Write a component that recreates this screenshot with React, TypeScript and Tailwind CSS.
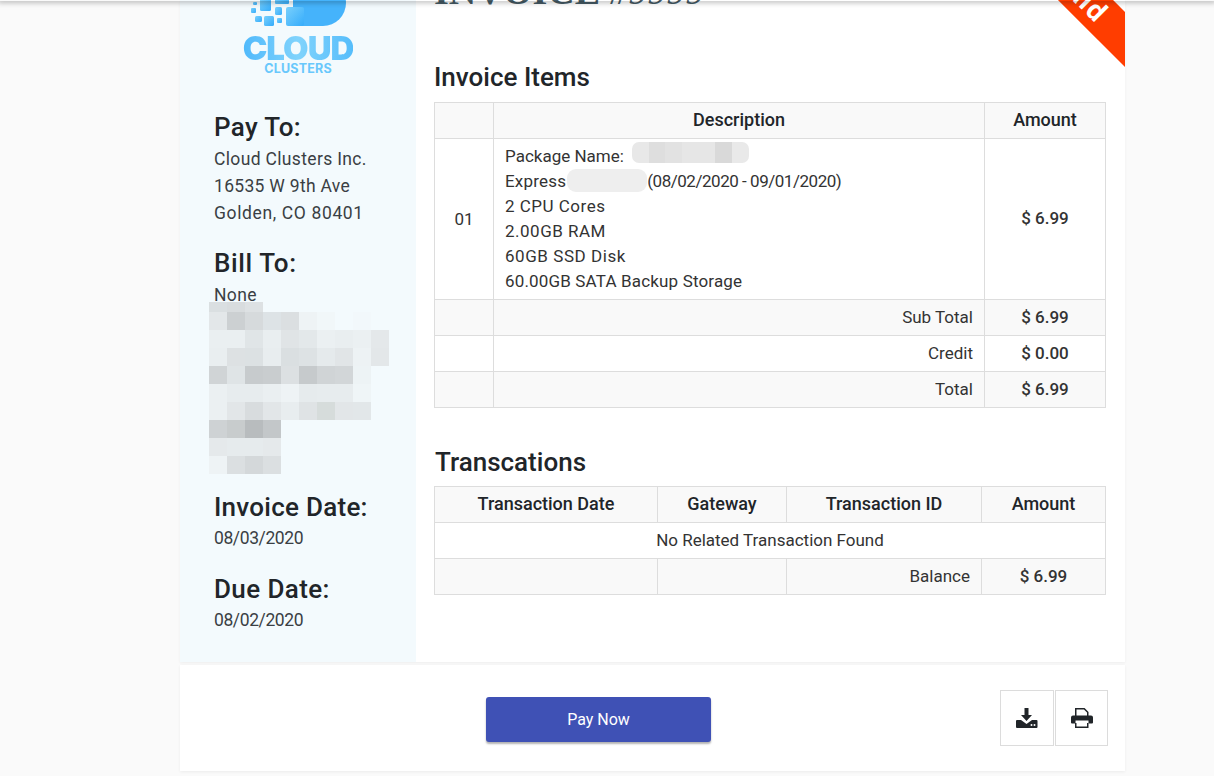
import React from "react";

const P = "#f3fafd";
const mosaic: string[][] = [
  ["#dadfe1", "#d8dcde", "#dde1e3", P, P, P, P, P, P, P],
  ["#e3e7e9", "#ccd0d2", "#d6dadc", "#dde3e6", "#dbdfe1", "#eef3f5", "#f1f7f9", P, "#f2f8fb", P],
  ["#eaeff1", "#eaeff1", "#e0e5e7", "#e9eef0", "#e0e4e6", "#e3e8ea", "#ebf0f2", "#e9eef0", "#ebf0f2", "#e4e8ea"],
  ["#e9eef0", "#dde1e3", "#dce1e3", "#e8edef", "#dadfe1", "#dde2e4", "#e5eaec", "#e1e5e7", "#edf2f4", "#e3e7e9"],
  ["#d0d4d6", "#dfe4e6", "#c7cbcd", "#c9cdcf", "#dce0e2", "#c6cacc", "#d0d4d6", "#d2d6d8", "#edf3f5", P],
  ["#ebf0f2", "#e7ecee", "#e7ecee", "#eaeff1", "#eef3f5", "#e6ebed", "#e7ecee", "#e7ecee", "#eff5f7", P],
  ["#ebf0f2", "#e2e6e8", "#d8dcde", "#e2e6e8", "#e8edef", "#dfe3e5", "#d6dcdb", "#e2e6e8", "#e2e7e9", P],
  ["#ced2d4", "#c8cccd", "#b8bcbe", "#c3c7c9", P, P, P, P, P, P],
  ["#e5e9eb", "#e6ebed", "#e6ebed", "#e5e9eb", P, P, P, P, P, P],
  ["#eef3f5", "#dbdfe1", "#d4d8da", "#dbdfe1", P, P, P, P, P, P],
];

const nameBlur = ["#e8e8e8", "#dedede", "#e2e2e2", "#e6e6e6", "#e6e6e6", "#d9d9d9", "#e9e9e9"];

function Logo() {
  return (
    <div className="flex flex-col items-center">
      <svg width="120" height="27" viewBox="0 0 120 27" className="block">
        <defs>
          <linearGradient id="lg" x1="0" y1="0" x2="1" y2="1">
            <stop offset="0" stopColor="#7ad0fc" />
            <stop offset="1" stopColor="#35acfb" />
          </linearGradient>
        </defs>
        <path d="M58 -20h27a23 23 0 0 1 0 46h-30v-38z" fill="#45b3fb" />
        <rect x="48" y="7" width="18" height="19" rx="2" fill="url(#lg)" />
        <rect x="26" y="16" width="10" height="10" rx="1.500" fill="url(#lg)" />
        <rect x="17" y="16" width="7" height="6" rx="1.500" fill="url(#lg)" />
        <rect x="39" y="18" width="5" height="5" rx="1" fill="url(#lg)" />
        <rect x="37" y="7" width="7" height="8" rx="1.500" fill="url(#lg)" />
        <rect x="13" y="8" width="5" height="5" rx="1" fill="url(#lg)" />
        <rect x="15" y="2" width="4" height="3" rx="1" fill="url(#lg)" />
        <rect x="22" y="-3" width="11" height="14" rx="1.500" fill="url(#lg)" />
        <rect x="37" y="-3" width="14" height="7" rx="1" fill="url(#lg)" />
      </svg>
      <div className="mt-[8px] font-['Inter',sans-serif] font-black text-[33px] leading-[27px] tracking-[-1px] bg-linear-to-r from-[#4fb9fb] via-[#80d3fc] to-[#55bdfb] bg-clip-text text-transparent">CLOUD</div>
      <div className="mt-[1px] font-['Inter',sans-serif] font-bold text-[12.500px] leading-[12px] tracking-[0.2px] text-[#69c8fc]">CLUSTERS</div>
    </div>
  );
}

const sideHead = "text-[26px] leading-[29px] font-medium text-[#212529]";
const sideText = "text-[17.500px] leading-[27px] text-[#3a3f44]";
const cellBase = "border border-[#dddddd] px-[11px] pb-[2px] h-[36px] text-[17px] leading-[24px] text-[#333333]";
const headCell = "border border-[#dddddd] px-[11px] pb-[2px] h-[36px] text-[18px] leading-[24px] font-medium text-center text-[#212529] bg-[#f9f9f9]";
const amountCell = "border border-[#dddddd] px-[11px] pb-[2px] h-[36px] text-[17px] leading-[24px] text-[#333333] text-center font-medium";

export default function App() {
  return (
    <div className="relative h-[776px] w-[1214px] overflow-hidden bg-[#fafafa] font-['Roboto','Liberation_Sans',sans-serif]">
      <div className="absolute top-0 left-0 right-0 h-[1px] z-10 shadow-[0_0_5px_2px_rgba(0,0,0,0.25)]" />
      <div className="ml-[180px] w-[945px] flex flex-col">
        <div className="flex h-[662px] bg-white shadow-[0_1px_3px_rgba(0,0,0,0.05)] relative overflow-hidden">
          <aside className="w-[236px] shrink-0 bg-[#f3fafd] pl-[34px]">
            <div className="-ml-[34px] w-[236px] h-[77px]">
              <Logo />
            </div>
            <div className="mt-[36px]">
              <h3 className={`${sideHead} tracking-[0.35px]`}>Pay To:</h3>
              <div className={`mt-[4px] ${sideText}`}>
                <div className="tracking-[0.34px]">Cloud Clusters Inc.</div>
                <div className="tracking-[0.3px]">16535 W 9th Ave</div>
                <div className="tracking-[0.63px]">Golden, CO 80401</div>
              </div>
            </div>
            <div className="mt-[22px]">
              <h3 className={`${sideHead} tracking-[0.6px]`}>Bill To:</h3>
              <div className="mt-[5px] text-[17.500px] leading-[24px] text-[#3a3f44] tracking-[0.35px]">None</div>
              <div className="-ml-[5px] mt-[-5px] grid grid-cols-[repeat(10,18px)] grid-rows-[10px_repeat(9,18px)] w-[180px] h-[172px]">
                {mosaic.flat().map((c, i) => (
                  <div key={i} style={{ backgroundColor: c }} />
                ))}
              </div>
            </div>
            <div className="mt-[19px]">
              <h3 className={`${sideHead} tracking-[0.26px]`}>Invoice Date:</h3>
              <div className={`mt-[3px] ${sideText} tracking-[-0.4px]`}>08/03/2020</div>
            </div>
            <div className="mt-[23px]">
              <h3 className={`${sideHead} tracking-[0.4px]`}>Due Date:</h3>
              <div className={`mt-[3px] ${sideText} tracking-[-0.4px]`}>08/02/2020</div>
            </div>
          </aside>

          <main className="flex-1 pl-[18px] pr-[20px] relative">
            <div className="h-[6px] relative">
              <div className="absolute left-[0px] bottom-[-4px] font-['Liberation_Serif',serif] text-[38px] leading-[38px] text-[#455a64] whitespace-nowrap">
                <span className="font-bold">INVOICE</span> <span className="italic">#9999</span>
              </div>
            </div>
            <h3 className="mt-[57px] text-[26px] leading-[29px] font-medium text-[#212529]">Invoice Items</h3>
            <table className="mt-[10px] w-[671px] border-collapse table-fixed">
              <colgroup>
                <col className="w-[59px]" />
                <col className="w-[491px]" />
                <col className="w-[121px]" />
              </colgroup>
              <tbody>
                <tr>
                  <td className={headCell} />
                  <td className={headCell}>Description</td>
                  <td className={headCell}>Amount</td>
                </tr>
                <tr>
                  <td className="border border-[#dddddd] px-[11px] h-[36px] text-[17px] leading-[24px] text-[#333333] text-center">01</td>
                  <td className="border border-[#dddddd] px-[11px] py-[5px] text-[17px] leading-[25px] text-[#333333]">
                    <div className="relative">
                      <span>Package Name:</span>
                      <div className="absolute left-[127px] top-[-2px] flex h-[21px] rounded-[7px] overflow-hidden">
                        {nameBlur.map((c, i) => (
                          <div key={i} className="w-[16.700px]" style={{ backgroundColor: c }} />
                        ))}
                      </div>
                    </div>
                    <div className="relative">
                      <span className="tracking-[0.2px]">Express</span>
                      <span className="ml-[81px] tracking-[-0.47px]">(08/02/2020 - 09/01/2020)</span>
                      <div className="absolute left-[62px] top-[0px] w-[80px] h-[23px] rounded-[9px] bg-[#eeeeee]" />
                    </div>
                    <div className="tracking-[0.5px]">2 CPU Cores</div>
                    <div className="tracking-[0.5px]">2.00GB RAM</div>
                    <div className="tracking-[0.56px]">60GB SSD Disk</div>
                    <div className="tracking-[0.16px]">60.00GB SATA Backup Storage</div>
                  </td>
                  <td className={amountCell}>$ 6.99</td>
                </tr>
                <tr className="bg-[#f9f9f9]">
                  <td className={cellBase} />
                  <td className={`${cellBase} text-right`}>Sub Total</td>
                  <td className={amountCell}>$ 6.99</td>
                </tr>
                <tr>
                  <td className={cellBase} />
                  <td className={`${cellBase} text-right`}>Credit</td>
                  <td className={amountCell}>$ 0.00</td>
                </tr>
                <tr className="bg-[#f9f9f9]">
                  <td className={cellBase} />
                  <td className={`${cellBase} text-right`}>Total</td>
                  <td className={amountCell}>$ 6.99</td>
                </tr>
              </tbody>
            </table>

            <h3 className="mt-[40px] ml-[1px] text-[26px] leading-[29px] font-medium text-[#212529]">Transcations</h3>
            <table className="mt-[9px] w-[671px] border-collapse table-fixed">
              <colgroup>
                <col className="w-[223px]" />
                <col className="w-[129px]" />
                <col className="w-[195px]" />
                <col className="w-[124px]" />
              </colgroup>
              <tbody>
                <tr>
                  <td className={headCell}>Transaction Date</td>
                  <td className={headCell}>Gateway</td>
                  <td className={headCell}>Transaction ID</td>
                  <td className={headCell}>Amount</td>
                </tr>
                <tr>
                  <td colSpan={4} className={`${cellBase} text-center`}>No Related Transaction Found</td>
                </tr>
                <tr className="bg-[#f9f9f9]">
                  <td className={cellBase} />
                  <td className={cellBase} />
                  <td className={`${cellBase} text-right`}>Balance</td>
                  <td className={amountCell}>$ 6.99</td>
                </tr>
              </tbody>
            </table>

            <div className="absolute top-[-29.500px] right-[-70px] w-[240px] h-[39px] rotate-45 bg-[#ff3d00] pl-[14px] text-white text-center font-bold text-[28px] leading-[39px] tracking-[1.500px]">
              Paid
            </div>
          </main>
        </div>

        <div className="mt-[3px] h-[106px] bg-white shadow-[0_1px_3px_rgba(0,0,0,0.06)] flex items-center relative">
          <button className="ml-[306px] mt-[2px] pt-[1px] w-[225px] h-[45px] bg-[#3f51b5] rounded-[3px] text-white text-[16px] shadow-[0_2px_2px_rgba(0,0,0,0.3)]">
            Pay Now
          </button>
          <div className="ml-auto mr-[17px] flex gap-[1px]">
            <div className="w-[54px] h-[56px] border border-[#dcdcdc] flex items-center justify-center">
              <svg width="22" height="20" viewBox="0 0 22 20">
                <path fill="#212529" d="M8.500 0h4v7h3.500l-5.500 6-5.500-6h3.500z" />
                <path fill="#212529" d="M1 12h4l5.500 4 5.500-4h4.500a1 1 0 0 1 1 1v6a1 1 0 0 1-1 1H1a1 1 0 0 1-1-1v-6a1 1 0 0 1 1-1z" />
                <circle cx="15.500" cy="17" r="1" fill="#fff" />
                <circle cx="18.500" cy="17" r="1" fill="#fff" />
              </svg>
            </div>
            <div className="w-[53px] h-[56px] border border-[#dcdcdc] flex items-center justify-center">
              <svg width="22" height="20" viewBox="0 0 22 20">
                <path fill="none" stroke="#212529" strokeWidth="1.500" d="M4.750 8V.750h8.500l3.500 3.500V8M4.750 15v4.250h12V15" />
                <path fill="#212529" d="M2 7.500h18a2 2 0 0 1 2 2v5a1 1 0 0 1-1 1h-3.500v-3h-13v3H1a1 1 0 0 1-1-1v-5a2 2 0 0 1 2-2z" />
              </svg>
            </div>
          </div>
        </div>
      </div>
    </div>
  );
}
